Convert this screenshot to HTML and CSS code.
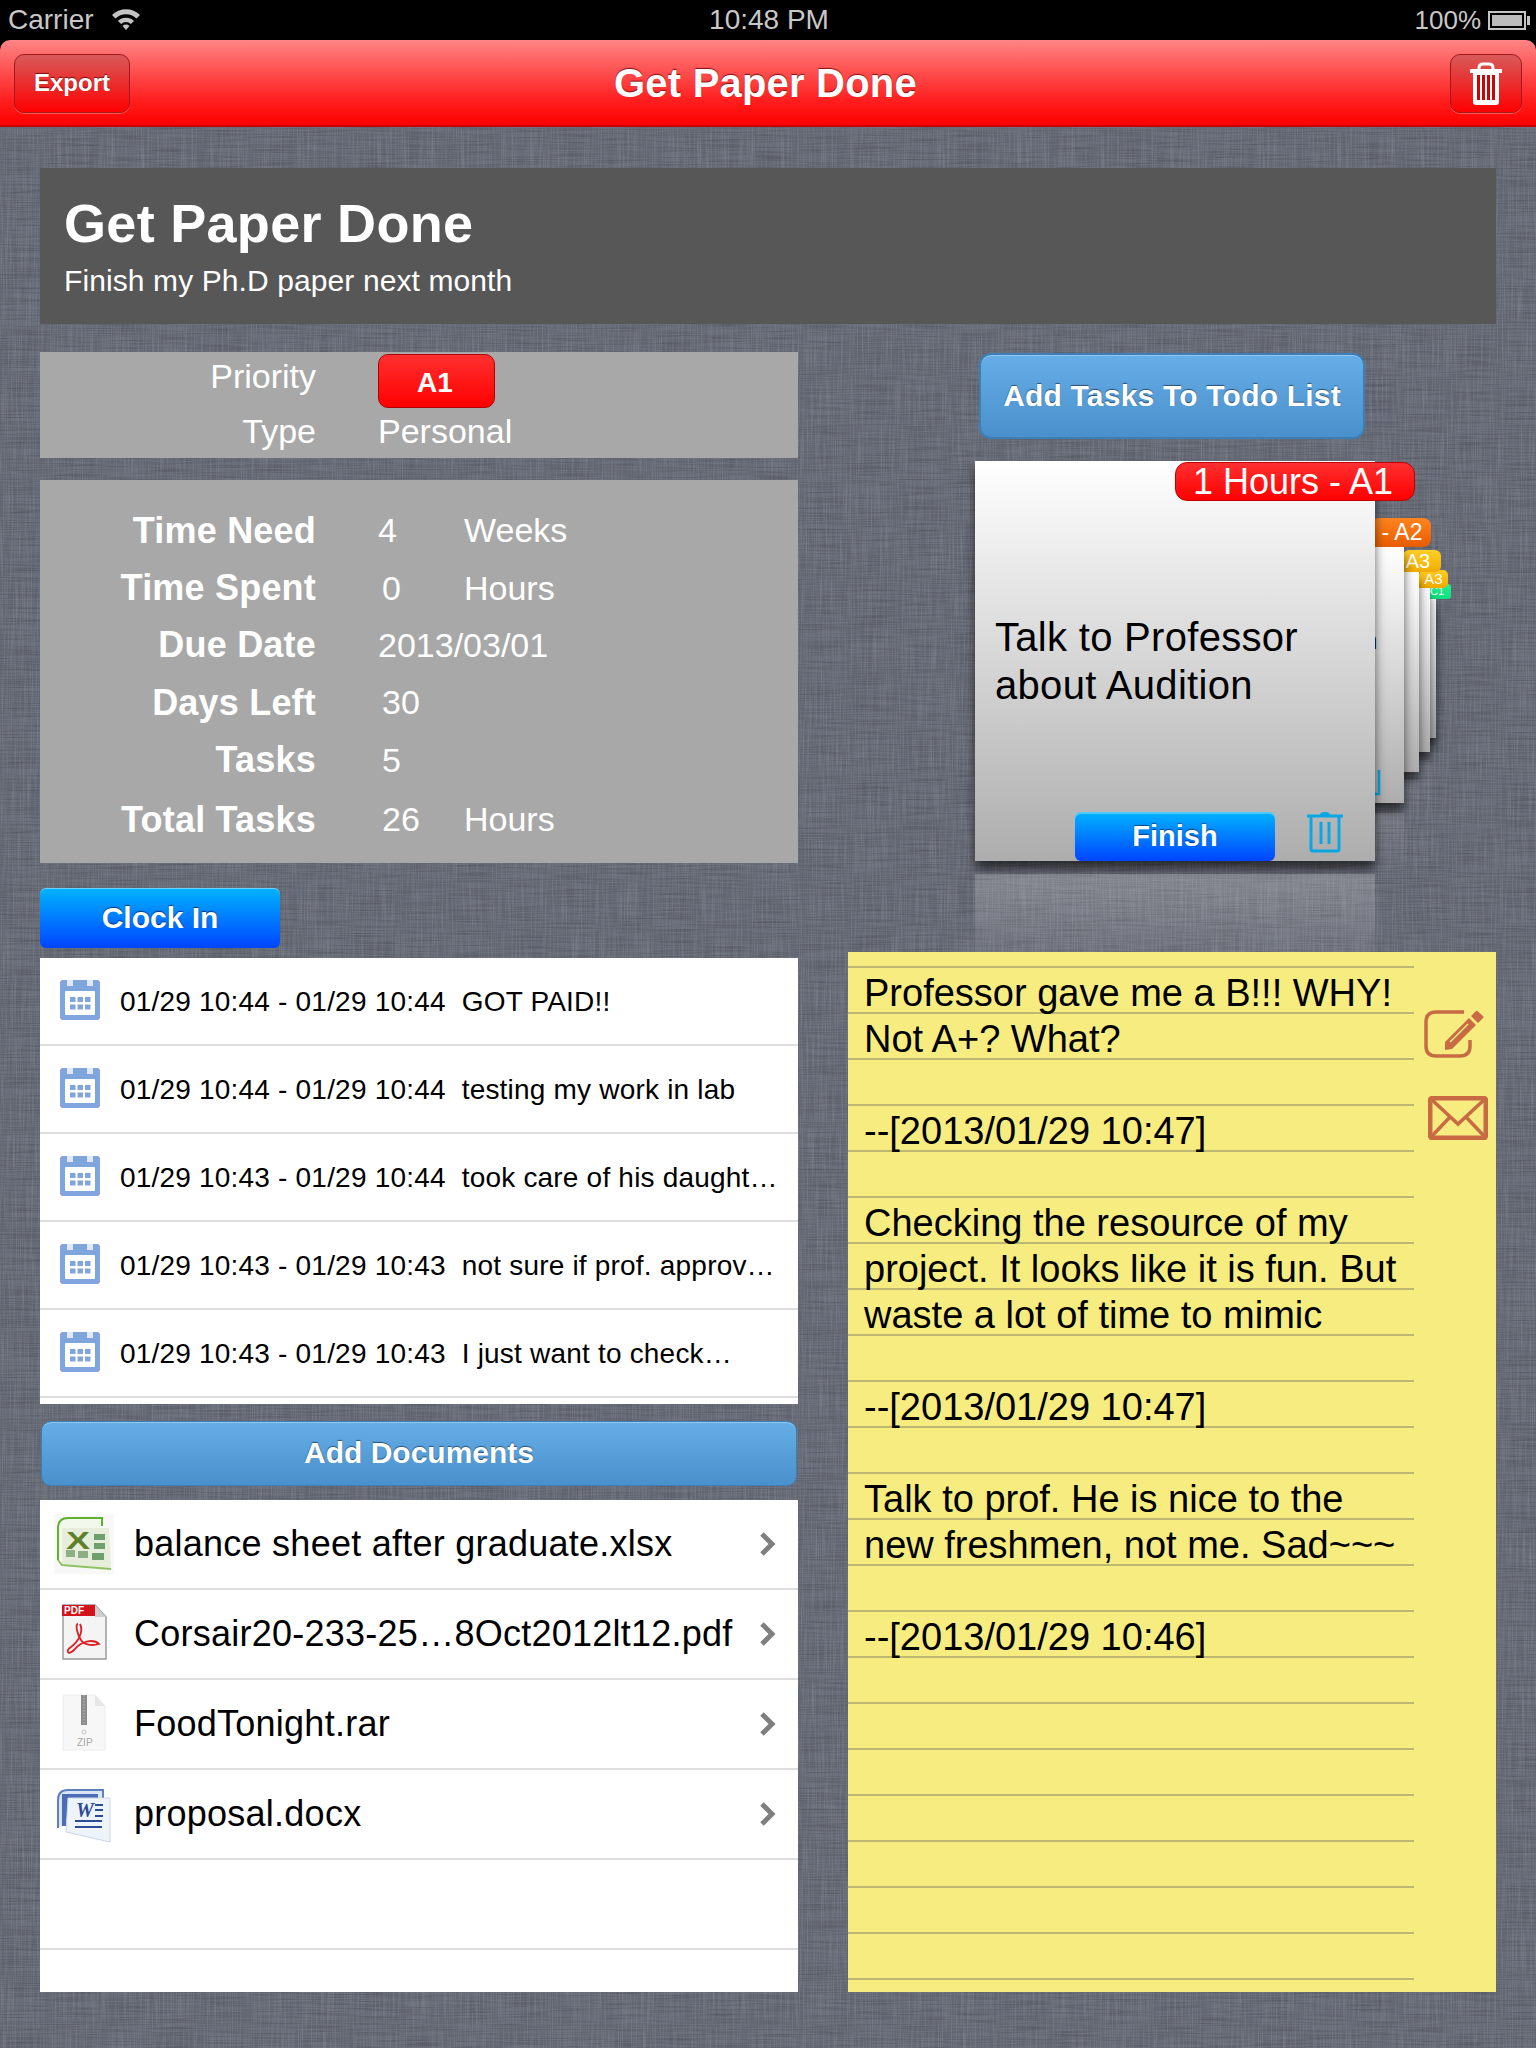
FILE: index.html
```html
<!DOCTYPE html>
<html>
    <head>
        <title>Get Paper Done</title>
        <link rel="stylesheet" href="styles.css">
    </head>

    <body>
        <!--Status bar-->
        <div class="STATUS_BAR">
            <div class="STATUS_LEFT">
                Carrier
                <svg class="WIFI" width="32" height="24" viewBox="0 0 32 24">
                    <path d="M2 9 A20 20 0 0 1 30 9 L26.500 12.500 A15 15 0 0 0 5.500 12.500 Z" fill="#c4c4c4"/>
                    <path d="M8 15 A11.500 11.500 0 0 1 24 15 L20.800 18 A7 7 0 0 0 11.200 18 Z" fill="#c4c4c4"/>
                    <path d="M16 24 L12.500 20 A5 5 0 0 1 19.500 20 Z" fill="#c4c4c4"/>
                </svg>
            </div>
            <div class="STATUS_TIME">10:48 PM</div>
            <div class="STATUS_RIGHT">
                100%
                <div class="BATTERY"><div class="BATTERY_FILL"></div></div>
            </div>
        </div>

        <!--Red navigation bar-->
        <div class="NAV_BAR">
            <div class="NAV_BUTTON NAV_EXPORT">Export</div>
            <div class="NAV_TITLE">Get Paper Done</div>
            <div class="NAV_BUTTON NAV_TRASH">
                <svg width="32" height="44" viewBox="0 0 32 44">
                    <path d="M9 8 V6 Q9 2 13 2 H19 Q23 2 23 6 V8" fill="none" stroke="#fff" stroke-width="3"/>
                    <rect x="0" y="7" width="32" height="4" fill="#fff"/>
                    <path d="M3 11 H29 V40 Q29 43 26 43 H6 Q3 43 3 40 Z" fill="#fff"/>
                    <rect x="7" y="13" width="18" height="25" fill="#c40808"/>
                    <path d="M11 13 V38 M16 13 V38 M21 13 V38" stroke="#fff" stroke-width="2"/>
                </svg>
            </div>
        </div>

        <div class="PAGE">
            <!--Project title-->
            <div class="HEADER">
                <div class="HEADER_TITLE">Get Paper Done</div>
                <div class="HEADER_SUB">Finish my Ph.D paper next month</div>
            </div>

            <div class="COLUMNS">
                <div class="LEFT_COLUMN">
                    <div class="INFO_PANEL INFO_TOP">
                        <div class="INFO_ROW INFO_ROW_TOP">
                            <div class="INFO_LABEL INFO_LABEL_PRIORITY">Priority</div>
                            <div class="PRIORITY_BADGE">A1</div>
                        </div>
                        <div class="INFO_ROW INFO_ROW_TYPE">
                            <div class="INFO_LABEL">Type</div>
                            <div class="INFO_VALUE">Personal</div>
                        </div>
                    </div>

                    <div class="INFO_PANEL INFO_STATS">
                        <div class="STAT_ROW">
                            <div class="STAT_LABEL">Time Need</div>
                            <div class="STAT_VALUE">4</div>
                            <div class="STAT_UNIT">Weeks</div>
                        </div>
                        <div class="STAT_ROW">
                            <div class="STAT_LABEL">Time Spent</div>
                            <div class="STAT_VALUE STAT_INDENT">0</div>
                            <div class="STAT_UNIT">Hours</div>
                        </div>
                        <div class="STAT_ROW">
                            <div class="STAT_LABEL">Due Date</div>
                            <div class="STAT_VALUE">2013/03/01</div>
                        </div>
                        <div class="STAT_ROW">
                            <div class="STAT_LABEL">Days Left</div>
                            <div class="STAT_VALUE STAT_INDENT">30</div>
                        </div>
                        <div class="STAT_ROW">
                            <div class="STAT_LABEL">Tasks</div>
                            <div class="STAT_VALUE STAT_INDENT">5</div>
                        </div>
                        <div class="STAT_ROW STAT_ROW_LAST">
                            <div class="STAT_LABEL">Total Tasks</div>
                            <div class="STAT_VALUE STAT_INDENT">26</div>
                            <div class="STAT_UNIT">Hours</div>
                        </div>
                    </div>

                    <div class="CLOCK_BUTTON">Clock In</div>

                    <!--Clock in history-->
                    <div class="TIME_LIST">
                        <div class="TIME_ROW">
                            <svg class="CALENDAR" width="40" height="40" viewBox="0 0 40 40"><use href="#calendar"/></svg>
                            <div class="TIME_TEXT">01/29 10:44 - 01/29 10:44&nbsp; GOT PAID!!</div>
                        </div>
                        <div class="TIME_ROW">
                            <svg class="CALENDAR" width="40" height="40" viewBox="0 0 40 40"><use href="#calendar"/></svg>
                            <div class="TIME_TEXT">01/29 10:44 - 01/29 10:44&nbsp; testing my work in lab</div>
                        </div>
                        <div class="TIME_ROW">
                            <svg class="CALENDAR" width="40" height="40" viewBox="0 0 40 40"><use href="#calendar"/></svg>
                            <div class="TIME_TEXT">01/29 10:43 - 01/29 10:44&nbsp; took care of his daught…</div>
                        </div>
                        <div class="TIME_ROW">
                            <svg class="CALENDAR" width="40" height="40" viewBox="0 0 40 40"><use href="#calendar"/></svg>
                            <div class="TIME_TEXT">01/29 10:43 - 01/29 10:43&nbsp; not sure if prof. approv…</div>
                        </div>
                        <div class="TIME_ROW">
                            <svg class="CALENDAR" width="40" height="40" viewBox="0 0 40 40"><use href="#calendar"/></svg>
                            <div class="TIME_TEXT">01/29 10:43 - 01/29 10:43&nbsp; I just want to check…</div>
                        </div>
                    </div>

                    <div class="DOC_BUTTON">Add Documents</div>

                    <!--Attached documents-->
                    <div class="FILE_LIST">
                        <div class="FILE_ROW">
                            <svg class="FILE_ICON" width="60" height="60" viewBox="0 0 60 60">
                                <rect width="60" height="60" fill="#f8f8f8"/>
                                <path d="M4 46 V14 Q4 4 14 4 H48 V12" fill="#f3f8ec" stroke="#5fb02c" stroke-width="2"/>
                                <path d="M8 14 H55 L57 54 L8 50 Z" fill="#e6eedb"/>
                                <path d="M4 46 L8 51 L57 55" fill="none" stroke="#8fc263" stroke-width="2"/>
                                <rect x="40" y="20" width="11" height="6" fill="#6f9f6c"/>
                                <rect x="40" y="29" width="11" height="6" fill="#6f9f6c"/>
                                <rect x="38" y="39" width="12" height="7" fill="#6f9f6c"/>
                                <rect x="12" y="36" width="9" height="7" fill="#8ab083"/>
                                <rect x="24" y="37" width="10" height="7" fill="#8ab083"/>
                                <text transform="translate(12,35) scale(1.500,1)" class="ICON_X">X</text>
                            </svg>
                            <div class="FILE_NAME">balance sheet after graduate.xlsx</div>
                            <svg class="CHEVRON" width="20" height="28" viewBox="0 0 20 28"><path d="M4 4 L14 14 L4 24" fill="none" stroke="#7f7f7f" stroke-width="5"/></svg>
                        </div>
                        <div class="FILE_ROW">
                            <svg class="FILE_ICON" width="60" height="60" viewBox="0 0 60 60">
                                <path d="M9 1 H41 L52 13 V55 H9 Z" fill="#f4f4f4" stroke="#9a9a9a" stroke-width="1.500"/>
                                <path d="M41 1 L52 13 H41 Z" fill="#cfcfcf"/>
                                <rect x="8" y="1" width="33" height="11" fill="#d2141a"/>
                                <text x="10" y="10" class="ICON_PDF">PDF</text>
                                <path d="M24 20 C21 20 23 30 27 36 C30 41 38 42 45 40 C40 35 28 36 20 46 C14 52 11 47 17 43 C24 38 30 28 26 20" fill="none" stroke="#dc1f22" stroke-width="1.800"/>
                            </svg>
                            <div class="FILE_NAME">Corsair20-233-25…8Oct2012lt12.pdf</div>
                            <svg class="CHEVRON" width="20" height="28" viewBox="0 0 20 28"><path d="M4 4 L14 14 L4 24" fill="none" stroke="#7f7f7f" stroke-width="5"/></svg>
                        </div>
                        <div class="FILE_ROW">
                            <svg class="FILE_ICON" width="60" height="60" viewBox="0 0 60 60">
                                <path d="M9 1 H41 L51 12 V56 H9 Z" fill="#f7f7f7" stroke="#ececec"/>
                                <path d="M41 1 L51 12 H41 Z" fill="#e6e6e6"/>
                                <rect x="27" y="1" width="6" height="30" fill="#8c8c8c"/>
                                <path d="M30 1 V31" stroke="#bdbdbd" stroke-dasharray="1.500 1.500"/>
                                <circle cx="30" cy="38" r="2" fill="none" stroke="#c4c4c4"/>
                                <text x="23" y="52" class="ICON_ZIP">ZIP</text>
                            </svg>
                            <div class="FILE_NAME">FoodTonight.rar</div>
                            <svg class="CHEVRON" width="20" height="28" viewBox="0 0 20 28"><path d="M4 4 L14 14 L4 24" fill="none" stroke="#7f7f7f" stroke-width="5"/></svg>
                        </div>
                        <div class="FILE_ROW">
                            <svg class="FILE_ICON" width="60" height="60" viewBox="0 0 60 60">
                                <path d="M4 44 V16 Q4 6 14 6 H49 V14" fill="#dbe4f3" stroke="#5e7fc0" stroke-width="2"/>
                                <path d="M8 10 H44 V14 H15 L12 42 H8 Z" fill="#4a6db5"/>
                                <path d="M14 14 H56 V58 L12 48 Z" fill="#eef4fb" stroke="#cdd6e0"/>
                                <text x="22" y="33" class="ICON_W">W</text>
                                <path d="M41 21 H49 M41 26 H49 M41 32 H49" stroke="#2c4a96" stroke-width="2"/>
                                <path d="M21 37 H48 M21 43 H48" stroke="#2c4a96" stroke-width="2"/>
                            </svg>
                            <div class="FILE_NAME">proposal.docx</div>
                            <svg class="CHEVRON" width="20" height="28" viewBox="0 0 20 28"><path d="M4 4 L14 14 L4 24" fill="none" stroke="#7f7f7f" stroke-width="5"/></svg>
                        </div>
                        <div class="FILE_ROW"></div>
                    </div>
                </div>

                <div class="RIGHT_COLUMN">
                    <div class="ADD_TASK_BUTTON">Add Tasks To Todo List</div>

                    <!--Cover flow of todo tasks, the front card is the last one here-->
                    <div class="CARD_STACK">
                        <div class="TASK_CARD CARD_5"><div class="CARD_BADGE BADGE_5">C1</div></div>
                        <div class="TASK_CARD CARD_4"><div class="CARD_BADGE BADGE_4">A3</div></div>
                        <div class="TASK_CARD CARD_3"><div class="CARD_BADGE BADGE_3">A3</div></div>
                        <div class="TASK_CARD CARD_2">
                            <div class="CARD_BADGE BADGE_2">- A2</div>
                            <div class="CARD_2_TEXT">n</div>
                            <svg class="CARD_2_TRASH" width="10" height="26" viewBox="0 0 10 26"><path d="M6 0 V24 H0" fill="none" stroke="#0aa7e4" stroke-width="2.500"/></svg>
                        </div>
                        <div class="TASK_CARD CARD_1">
                            <div class="CARD_BADGE BADGE_1">1 Hours - A1</div>
                            <div class="CARD_TEXT">Talk to Professor<br>about Audition</div>
                            <div class="FINISH_BUTTON">Finish</div>
                            <svg class="CARD_TRASH" width="36" height="42" viewBox="0 0 36 42">
                                <path d="M13 4 Q13 1 18 1 Q23 1 23 4" fill="#0aa7e4"/>
                                <path d="M0 5 H36" stroke="#0aa7e4" stroke-width="3"/>
                                <path d="M4 5 V38 Q4 40 6 40 H30 Q32 40 32 38 V5" fill="none" stroke="#0aa7e4" stroke-width="3"/>
                                <path d="M14 11 V33 M22 11 V33" stroke="#0aa7e4" stroke-width="3"/>
                            </svg>
                        </div>
                    </div>

                    <!--Yellow note pad-->
                    <div class="NOTE_PAD">
                        <div class="NOTE_LINES">
                            <div class="NOTE_TEXT">Professor gave me a B!!! WHY!
Not A+? What?

--[2013/01/29 10:47]

Checking the resource of my
project. It looks like it is fun. But
waste a lot of time to mimic

--[2013/01/29 10:47]

Talk to prof. He is nice to the
new freshmen, not me. Sad~~~

--[2013/01/29 10:46]</div>
                        </div>
                        <div class="NOTE_TOOLS">
                            <svg width="60" height="48" viewBox="0 0 60 48">
                                <path d="M40 2 H12 Q2 2 2 12 V36 Q2 46 12 46 H36 Q46 46 46 36 V30" fill="none" stroke="#c86b45" stroke-width="3.500"/>
                                <path d="M21 32 L45 8 L52 15 L28 39 L21 40 Z" fill="#c86b45"/>
                                <path d="M26 32 L44 14" stroke="#f7ec80" stroke-width="1.500"/>
                                <path d="M47 6 L52 1 Q53 0.500 54 1.500 L59 6 Q60 7 59 8 L54 13 Z" fill="#c86b45"/>
                            </svg>
                            <svg class="MAIL_ICON" width="60" height="44" viewBox="0 0 60 44">
                                <rect x="2" y="2" width="56" height="40" rx="3" fill="none" stroke="#c86b45" stroke-width="5"/>
                                <path d="M3 3 L30 28 L57 3 M3 41 L22 21 M57 41 L38 21" fill="none" stroke="#c86b45" stroke-width="3.500"/>
                            </svg>
                        </div>
                    </div>
                </div>
            </div>
        </div>

        <!--Calendar icon used by each clock in row-->
        <svg class="SVG_DEFS" width="0" height="0">
            <symbol id="calendar" viewBox="0 0 40 40">
                <path d="M3 0 H37 Q40 0 40 3 V37 Q40 40 37 40 H3 Q0 40 0 37 V3 Q0 0 3 0 Z" fill="#80a4dc"/>
                <rect x="5" y="11" width="30" height="24" rx="1" fill="#fff"/>
                <rect x="7" y="0" width="6" height="6" fill="#dfe8f6"/>
                <rect x="27" y="0" width="6" height="6" fill="#dfe8f6"/>
                <path d="M10 17 h5.500 v5 h-5.500 z M17.500 17 h5.500 v5 h-5.500 z M25 17 h5.500 v5 h-5.500 z M10 24.500 h5.500 v5 h-5.500 z M17.500 24.500 h5.500 v5 h-5.500 z M25 24.500 h5.500 v5 h-5.500 z" fill="#80a4dc"/>
            </symbol>
        </svg>
    </body>
</html>
```

FILE: styles.css
```css
/*Linen gray: #696D79*/
/*Note yellow: #F7EC80*/
body {
    margin: 0;
    width: 1536px;
    height: 2048px;
    overflow: hidden;
    font-family: "Liberation Sans", Arial, sans-serif;
    background-color: #000;
}
/*Status bar*/
.STATUS_BAR {
    display: grid;
    grid-template-columns: 1fr auto 1fr;
    align-items: center;
    height: 40px;
    padding: 0 6px 0 8px;
    box-sizing: border-box;
    position: relative;
    background-color: #000;
    color: #c8c8c8;
}
.STATUS_LEFT {
    display: flex;
    align-items: center;
    gap: 16px;
    font-size: 28px;
}
.WIFI {
    margin-top: -4px;
}
.STATUS_TIME {
    font-size: 28px;
}
.STATUS_RIGHT {
    display: flex;
    justify-content: flex-end;
    align-items: center;
    gap: 7px;
    font-size: 26px;
}
.BATTERY {
    position: relative;
    width: 30px;
    height: 11px;
    padding: 2px;
    margin-right: 4px;
    border: 2px solid #c4c4c4;
}
/*Battery nub*/
.BATTERY::after {
    content: "";
    position: absolute;
    right: -6px;
    top: 3px;
    width: 3px;
    height: 9px;
    background-color: #c4c4c4;
}
.BATTERY_FILL {
    height: 100%;
    background-color: #bcbcbc;
}
/*Red navigation bar*/
.NAV_BAR {
    display: flex;
    justify-content: space-between;
    align-items: center;
    height: 87px;
    padding: 0 14px;
    box-sizing: border-box;
    position: relative;
    border-radius: 10px 10px 0 0;
    border-bottom: 2px solid #c80000;
    background: linear-gradient(#ff8585 0%, #ff2020 70%, #ff0000 100%);
}
.NAV_TITLE {
    position: absolute;
    left: 0;
    right: 5px;
    top: 21px;
    text-align: center;
    font-size: 40px;
    font-weight: bold;
    letter-spacing: 0.200px;
    color: white;
    text-shadow: 0 -1px 1px rgba(90, 0, 0, 0.8);
}
.NAV_BUTTON {
    display: flex;
    justify-content: center;
    align-items: center;
    height: 59px;
    margin-top: 2px;
    box-sizing: border-box;
    border: 1px solid #a31818;
    border-radius: 10px;
    background: linear-gradient(#d85a5a, #ff0000);
    box-shadow: 0 1px 0 rgba(255, 255, 255, 0.3);
    color: white;
    font-size: 24px;
    font-weight: bold;
    text-shadow: 0 -1px 1px rgba(90, 0, 0, 0.8);
}
.NAV_EXPORT {
    width: 116px;
    padding-bottom: 2px;
}
.NAV_TRASH {
    width: 72px;
}
/*Linen background, two stretched noise layers crossing each other*/
.PAGE {
    height: 1921px;
    padding: 41px 40px 0 40px;
    box-sizing: border-box;
    background-color: #686c78;
    background-image: url("data:image/svg+xml,%3Csvg xmlns='http://www.w3.org/2000/svg' width='1536' height='1921'%3E%3Cfilter id='a' x='0' y='0' width='100%25' height='100%25'%3E%3CfeTurbulence type='fractalNoise' baseFrequency='0.02 0.8' numOctaves='2' seed='4'/%3E%3CfeColorMatrix values='0 0 0 0 0 0 0 0 0 0 0 0 0 0 0 1.800 0 0 0 -0.700'/%3E%3C/filter%3E%3Cfilter id='b' x='0' y='0' width='100%25' height='100%25'%3E%3CfeTurbulence type='fractalNoise' baseFrequency='0.8 0.02' numOctaves='2' seed='9'/%3E%3CfeColorMatrix values='0 0 0 0 1 0 0 0 0 1 0 0 0 0 1 1.800 0 0 0 -0.700'/%3E%3C/filter%3E%3Crect width='1536' height='1921' filter='url(%23a)' opacity='0.2'/%3E%3Crect width='1536' height='1921' filter='url(%23b)' opacity='0.14'/%3E%3C/svg%3E");
}
/*Project title*/
.HEADER {
    height: 156px;
    padding: 25px 24px 0 24px;
    box-sizing: border-box;
    background-color: #575757;
    color: white;
}
.HEADER_TITLE {
    font-size: 54px;
    font-weight: bold;
    letter-spacing: 0.300px;
    line-height: 60px;
}
.HEADER_SUB {
    margin-top: 10px;
    font-size: 30px;
    letter-spacing: 0.100px;
    line-height: 36px;
}
.COLUMNS {
    display: grid;
    grid-template-columns: 758px 648px;
    column-gap: 50px;
    margin-top: 28px;
}
/*Left column*/
.INFO_PANEL {
    background-color: #a8a8a8;
    color: white;
}
.INFO_TOP {
    height: 106px;
}
.INFO_ROW {
    display: flex;
    align-items: center;
    gap: 62px;
}
.INFO_ROW_TOP {
    height: 50px;
}
.INFO_ROW_TYPE {
    height: 56px;
    padding-top: 2px;
    box-sizing: border-box;
}
.INFO_LABEL {
    width: 276px;
    text-align: right;
    font-size: 34px;
}
.INFO_LABEL_PRIORITY {
    margin-top: -2px;
}
.INFO_VALUE {
    font-size: 34px;
}
.PRIORITY_BADGE {
    width: 117px;
    height: 54px;
    margin-top: 6px;
    margin-bottom: -2px;
    padding-right: 3px;
    box-sizing: border-box;
    border: 1px solid #b00000;
    border-radius: 10px;
    background: linear-gradient(#ff3030, #ff0000);
    text-align: center;
    line-height: 56px;
    font-size: 28px;
    font-weight: bold;
}
.INFO_STATS {
    height: 383px;
    margin-top: 22px;
    padding-top: 22px;
    box-sizing: border-box;
}
.STAT_ROW {
    display: flex;
    align-items: center;
    height: 57.400px;
}
.STAT_ROW_LAST {
    margin-top: 2px;
}
.STAT_LABEL {
    width: 276px;
    text-align: right;
    font-size: 36px;
    font-weight: bold;
    letter-spacing: 0.200px;
}
.STAT_VALUE {
    width: 86px;
    margin-left: 62px;
    white-space: nowrap;
    font-size: 34px;
}
.STAT_INDENT {
    width: 82px;
    padding-left: 4px;
}
.STAT_UNIT {
    font-size: 34px;
}
.CLOCK_BUTTON {
    width: 240px;
    height: 60px;
    margin-top: 25px;
    border-radius: 6px;
    background: linear-gradient(#00b4ff, #0044ff);
    box-shadow: inset 0 1px 0 rgba(255, 255, 255, 0.4);
    text-align: center;
    line-height: 60px;
    color: white;
    font-size: 30px;
    font-weight: bold;
    text-shadow: 0 -1px 1px rgba(0, 0, 0, 0.6);
}
.TIME_LIST {
    height: 446px;
    margin-top: 10px;
    background-color: white;
}
.TIME_ROW {
    display: flex;
    align-items: center;
    height: 88px;
    padding-top: 2px;
    padding-left: 20px;
    box-sizing: border-box;
    border-bottom: 2px solid #dedede;
}
.CALENDAR {
    flex: none;
    margin-top: -4px;
}
.TIME_TEXT {
    margin-left: 20px;
    white-space: nowrap;
    font-size: 28px;
    letter-spacing: 0.200px;
    color: black;
}
.DOC_BUTTON {
    height: 65px;
    margin: 17px 1px 0 1px;
    border: 1px solid #3a7fb8;
    border-radius: 10px;
    box-sizing: border-box;
    background: linear-gradient(#66aee8, #4a90cc);
    box-shadow: inset 0 1px 0 rgba(255, 255, 255, 0.3);
    text-align: center;
    line-height: 62px;
    color: white;
    font-size: 30px;
    font-weight: bold;
    text-shadow: 0 -1px 1px rgba(0, 0, 0, 0.5);
}
.FILE_LIST {
    height: 492px;
    margin-top: 14px;
    overflow: hidden;
    background-color: white;
}
.FILE_ROW {
    display: flex;
    align-items: center;
    height: 90px;
    padding: 0 20px 0 14px;
    box-sizing: border-box;
    border-bottom: 2px solid #dedede;
}
.FILE_ICON {
    flex: none;
}
.FILE_NAME {
    flex: 1;
    margin-left: 20px;
    white-space: nowrap;
    font-size: 36px;
    letter-spacing: 0.250px;
    color: black;
}
.CHEVRON {
    flex: none;
}
.ICON_X {
    font-family: "Liberation Sans", sans-serif;
    font-size: 24px;
    font-weight: bold;
    fill: #5f7f2a;
}
.ICON_PDF {
    font-family: "Liberation Sans", sans-serif;
    font-size: 10px;
    font-weight: bold;
    fill: white;
}
.ICON_ZIP {
    font-family: "Liberation Sans", sans-serif;
    font-size: 10px;
    fill: #a8a8a8;
}
.ICON_W {
    font-family: "Liberation Serif", serif;
    font-size: 20px;
    font-weight: bold;
    font-style: italic;
    fill: #2c4a96;
}
/*Right column*/
.ADD_TASK_BUTTON {
    width: 386px;
    height: 86px;
    margin-top: 1px;
    margin-left: 131px;
    border: 2px solid #3a7fb8;
    border-radius: 12px;
    box-sizing: border-box;
    background: linear-gradient(#66aee8, #4a90cc);
    box-shadow: inset 0 1px 0 rgba(255, 255, 255, 0.3);
    text-align: center;
    line-height: 82px;
    color: white;
    font-size: 30px;
    font-weight: bold;
    letter-spacing: 0.200px;
    text-shadow: 0 -1px 1px rgba(0, 0, 0, 0.5);
}
.CARD_STACK {
    position: relative;
    height: 513px;
}
.TASK_CARD {
    position: absolute;
    box-shadow: 0 8px 10px rgba(0, 0, 0, 0.6);
    background: linear-gradient(#ffffff, #adadad);
}
.TASK_CARD::after {
    content: "";
    position: absolute;
    left: 0;
    right: 0;
    top: 100%;
    height: 91px;
    background: linear-gradient(transparent 13px, rgba(255, 255, 255, 0.2) 13px, rgba(255, 255, 255, 0.06));
}
.CARD_1 {
    left: 127px;
    top: 22px;
    width: 400px;
    height: 400px;
    z-index: 5;
}
.CARD_2 {
    left: 300px;
    top: 108px;
    width: 256px;
    height: 256px;
    z-index: 4;
}
.CARD_2::after {
    left: 227px;
    height: 70px;
    background: linear-gradient(transparent 10px, rgba(255, 255, 255, 0.1) 10px, transparent);
}
.CARD_3 {
    left: 371px;
    top: 133px;
    width: 200px;
    height: 200px;
    z-index: 3;
}
.CARD_4 {
    left: 428px;
    top: 149px;
    width: 154px;
    height: 164px;
    z-index: 2;
}
.CARD_5 {
    left: 450px;
    top: 160px;
    width: 138px;
    height: 139px;
    z-index: 1;
}
.CARD_3::after,
.CARD_4::after,
.CARD_5::after {
    left: 60%;
    height: 50px;
    background: linear-gradient(transparent 8px, rgba(255, 255, 255, 0.05) 8px, transparent);
}
.CARD_BADGE {
    position: absolute;
    box-sizing: border-box;
    border-radius: 12px;
    text-align: center;
    white-space: nowrap;
    color: white;
}
.BADGE_1 {
    left: 200px;
    top: 1px;
    width: 240px;
    height: 39px;
    padding-right: 4px;
    border: 1px solid #c00000;
    background: linear-gradient(#ff3030, #ff0000);
    line-height: 37px;
    font-size: 36px;
}
.BADGE_2 {
    right: -27px;
    top: -29px;
    width: 60px;
    height: 29px;
    padding-left: 2px;
    background: linear-gradient(#ff8420, #e85c00);
    border-radius: 8px 8px 8px 0;
    line-height: 29px;
    font-size: 23px;
}
.BADGE_3 {
    right: -22px;
    top: -22px;
    width: 38px;
    height: 22px;
    padding-right: 8px;
    background: linear-gradient(#ffd028, #f0ac00);
    border-radius: 6px 6px 6px 0;
    line-height: 22px;
    font-size: 20px;
}
.BADGE_4 {
    right: -18px;
    top: -18px;
    width: 29px;
    height: 18px;
    background: linear-gradient(#ffcc20, #f0aa00);
    border-radius: 5px 5px 5px 0;
    line-height: 18px;
    font-size: 15px;
}
.BADGE_5 {
    right: -15px;
    top: -15px;
    width: 22px;
    height: 15px;
    padding-right: 6px;
    background: linear-gradient(#20f090, #10e080);
    border-radius: 3px;
    line-height: 15px;
    font-size: 11px;
}
.CARD_TEXT {
    position: absolute;
    left: 20px;
    top: 152px;
    font-size: 40px;
    letter-spacing: 0.300px;
    line-height: 48px;
    color: black;
}
.CARD_2_TEXT {
    position: absolute;
    left: 215px;
    top: 78px;
    font-size: 26px;
    line-height: 30px;
    color: black;
}
.CARD_2_TRASH {
    position: absolute;
    left: 225px;
    top: 223px;
}
.FINISH_BUTTON {
    position: absolute;
    left: 100px;
    bottom: 0;
    width: 200px;
    height: 49px;
    border-radius: 6px;
    background: linear-gradient(#00b4ff, #0044ff);
    box-shadow: inset 0 2px 0 rgba(255, 255, 255, 0.3);
    text-align: center;
    line-height: 49px;
    color: white;
    font-size: 29px;
    font-weight: bold;
    text-shadow: 0 -1px 1px rgba(0, 0, 0, 0.5);
}
.CARD_TRASH {
    position: absolute;
    left: 332px;
    top: 350px;
}
/*Note pad*/
.NOTE_PAD {
    display: flex;
    position: relative;
    z-index: 6;
    height: 1040px;
    background-color: #f7ec80;
}
.NOTE_LINES {
    width: 566px;
    height: 1040px;
    padding-left: 16px;
    box-sizing: border-box;
    background-image: repeating-linear-gradient(transparent 0 14px, #bdb771 14px 16px, transparent 16px 46px);
}
.NOTE_TEXT {
    padding-top: 18px;
    white-space: pre;
    font-size: 38px;
    line-height: 46px;
    color: black;
}
.NOTE_TOOLS {
    display: flex;
    flex-direction: column;
    gap: 38px;
    margin-top: 58px;
    margin-left: 10px;
}
.MAIL_ICON {
    margin-left: 4px;
}
.SVG_DEFS {
    position: absolute;
}
```
